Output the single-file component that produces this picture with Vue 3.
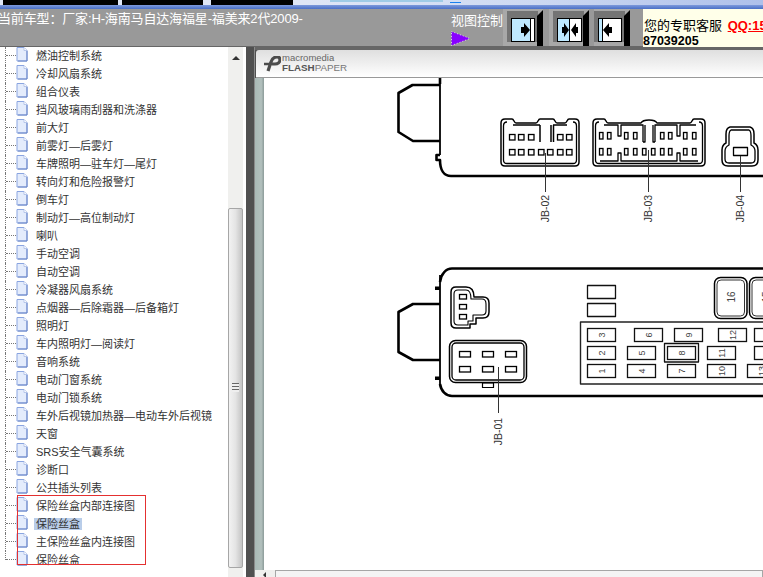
<script setup>
const items = [
  '燃油控制系统', '冷却风扇系统', '组合仪表', '挡风玻璃雨刮器和洗涤器', '前大灯', '前雾灯—后雾灯',
  '车牌照明—驻车灯—尾灯', '转向灯和危险报警灯', '倒车灯', '制动灯—高位制动灯', '喇叭', '手动空调',
  '自动空调', '冷凝器风扇系统', '点烟器—后除霜器—后备箱灯', '照明灯', '车内照明灯—阅读灯', '音响系统',
  '电动门窗系统', '电动门锁系统', '车外后视镜加热器—电动车外后视镜', '天窗', 'SRS安全气囊系统', '诊断口',
  '公共插头列表', '保险丝盒内部连接图', '保险丝盒', '主保险丝盒内连接图', '保险丝盒'
]

const jb02Pins = [
  [509, 134], [518, 134], [528, 134], [557, 134], [566, 134],
  [509, 149], [518, 149], [528, 149], [538, 149], [547, 149], [557, 149], [566, 149]
]
const jb03Pins = [
  [599, 132], [607, 132], [624, 132], [633, 132], [660, 132], [668, 132], [683, 132], [692, 132],
  [599, 148], [607, 148], [624, 148], [633, 148], [642, 148], [651, 148], [660, 148], [668, 148], [683, 148], [692, 148]
]
const jb01Pins = [
  [459, 351], [482, 351], [505, 351], [459, 366], [482, 366], [505, 366]
]
const fuses = [
  { n: '3', x: 587, y: 328 }, { n: '6', x: 634, y: 328 }, { n: '9', x: 674, y: 328 }, { n: '12', x: 718, y: 328 }, { n: '', x: 754, y: 328 },
  { n: '2', x: 587, y: 346 }, { n: '5', x: 627, y: 346 }, { n: '8', x: 667, y: 346 }, { n: '11', x: 707, y: 346 }, { n: '', x: 754, y: 346 },
  { n: '1', x: 587, y: 364 }, { n: '4', x: 627, y: 364 }, { n: '7', x: 667, y: 364 }, { n: '10', x: 707, y: 364 }, { n: '13', x: 747, y: 364 }
]
</script>

<template>
  <div class="page">
    <div class="top-strip">
      <span class="tab tab-1"></span>
      <span class="tab tab-2"></span>
      <span class="tab tab-3"></span>
      <span class="address"></span>
      <span class="link-dots"></span>
    </div>
    <div class="blue-band"></div>

    <div class="toolbar">
      <div class="car-title">当前车型：厂家:H-海南马自达海福星-福美来2代2009-</div>
      <div class="view-control">
        <div class="view-label">视图控制</div>
        <svg class="view-arrow" width="20" height="15" viewBox="0 0 20 15">
          <polygon points="0.5,0.5 19,7.5 0.5,14.5" fill="#8800ff" stroke="#fff" stroke-dasharray="1 2" stroke-width="0.7" />
        </svg>
      </div>

      <svg class="view-btn btn-1" width="40" height="37" viewBox="0 0 40 37">
        <rect width="40" height="37" fill="#a8a8a8" />
        <rect x="4" y="2" width="31" height="31" fill="#747474" />
        <polygon points="34,7 40,1 40,37 34,37" fill="#000" />
        <rect x="8.5" y="9.5" width="23" height="23" fill="#bfe9ff" stroke="#000" />
        <rect x="28" y="10" width="3" height="22" fill="#fff" />
        <line x1="27.5" y1="10" x2="27.5" y2="32" stroke="#000" />
        <path d="M18 18h3v-4l6 7-6 7v-4h-3z" fill="#000" />
      </svg>
      <svg class="view-btn btn-2" width="40" height="37" viewBox="0 0 40 37">
        <rect width="40" height="37" fill="#a8a8a8" />
        <rect x="4" y="2" width="31" height="31" fill="#747474" />
        <polygon points="34,7 40,1 40,37 34,37" fill="#000" />
        <rect x="8.5" y="9.5" width="24" height="23" fill="#fff" stroke="#000" />
        <rect x="9" y="10" width="11" height="22" fill="#bfe9ff" />
        <line x1="20.5" y1="10" x2="20.5" y2="32" stroke="#000" />
        <path d="M13 18h2v-4l5 7-5 7v-4h-2z" fill="#000" />
        <path d="M29 18h-2v-4l-5 7 5 7v-4h2z" fill="#000" />
      </svg>
      <svg class="view-btn btn-3" width="36" height="37" viewBox="0 0 36 37">
        <rect width="36" height="37" fill="#a8a8a8" />
        <rect x="0" y="2" width="31" height="31" fill="#747474" />
        <polygon points="30,7 36,1 36,37 30,37" fill="#000" />
        <rect x="4.5" y="9.5" width="23" height="23" fill="#fff" stroke="#000" />
        <rect x="5" y="10" width="3" height="22" fill="#bfe9ff" />
        <line x1="8.5" y1="10" x2="8.5" y2="32" stroke="#000" />
        <path d="M18 18h-3v-4l-6 7 6 7v-4h3z" fill="#000" />
      </svg>

      <div class="service">
        <div class="service-line">您的专职客服 <a class="qq">QQ:15</a></div>
        <div class="service-num">87039205</div>
      </div>
    </div>

    <div class="main">
      <div class="tree-panel">
        <ul class="tree">
          <li v-for="(item, i) in items" :key="i" class="tree-row">
            <span :class="['branch', { 'branch-last': i === items.length - 1 }]"></span>
            <svg class="file-icon" width="12" height="15" viewBox="0 0 12 15">
              <path d="M1 .5h7l3 3v10.500H1z" fill="#e4ecfc" stroke="#8aa5e0" />
              <path d="M8 .5v3h3" fill="#fff" stroke="#a9bce6" stroke-width="0.8" />
              <path d="M11 4v10H2" fill="none" stroke="#6a86c8" />
            </svg>
            <span :class="['label', { selected: i === 26 }]">{{ item }}</span>
          </li>
        </ul>
        <svg class="red-box" width="129" height="70" viewBox="0 0 129 70">
          <rect x="0.5" y="0.5" width="128" height="69" fill="none" stroke="#e43030" />
        </svg>
        <div class="scrollbar">
          <div class="scroll-up"><span class="up-arrow"></span></div>
          <div class="thumb"><span class="grip"></span></div>
        </div>
      </div>

      <div class="splitter"></div>

      <div class="paper">
        <div class="paper-head">
          <svg class="fp-logo" width="18" height="16" viewBox="0 0 18 16">
            <path d="M1 8h8" stroke="#4c4c4c" stroke-width="2.500" fill="none" />
            <path d="M5 15l3-9c1-3 3-5 6-5 2 0 3 1 3 3s-2 4-5 4H9" stroke="#4c4c4c" stroke-width="3.200" fill="none" />
          </svg>
          <div class="fp-text">
            <div class="fp-brand">macromedia</div>
            <div class="fp-name"><b>FLASH</b>PAPER</div>
          </div>
        </div>

        <div class="paper-body">
          <div class="paper-gutter"></div>
          <svg class="sheet" width="499" height="492" viewBox="264 78 499 492">
            <g fill="none" stroke="#000" stroke-linejoin="round">
              <!-- upper box outline -->
              <path d="M440 85H412.500L398.500 93V132L413 141H440" stroke-width="2.600" />
              <path d="M440 78V155" stroke-width="1.800" />
              <path d="M440 78V84" stroke-width="2.600" />
              <path d="M440 155H436.500V160H440C440 170 444 176 451 176H763" stroke-width="2.600" />

              <!-- JB-02 -->
              <path d="M505 119H512C514 119 514 123 516 123H536C538 123 538 119 540 119H553C555 119 555 123 557 123H565C567 123 567 119 569 119H575Q579 119 579 123V162Q579 166 575 166H505Q501 166 501 162V123Q501 119 505 119Z" stroke-width="1.500" />
              <path d="M507 122Q503.500 122 503.500 126V160Q503.500 163.500 507 163.500H573Q576.500 163.500 576.500 160V126Q576.500 122 573 122" stroke-width="1.300" />
              <path d="M540 125V142M551 125V142M553.500 125V142" stroke-width="1.500" />
              <path d="M513 125H540M553 125H567" stroke-width="1.300" />

              <!-- JB-03 -->
              <path d="M597 119H604C606 119 606 123 608 123H641C643 119 655 119 657 123H690C692 123 692 119 694 119H701Q705 119 705 123V162Q705 166 701 166H597Q593 166 593 162V123Q593 119 597 119Z" stroke-width="1.500" />
              <path d="M599 122Q595.500 122 595.500 126V160Q595.500 163.500 599 163.500H699Q702.500 163.500 702.500 160V126Q702.500 122 699 122" stroke-width="1.300" />
              <path d="M604 125H618V136H621V125H643V142M655 142V125H677V136H680V125H696" stroke-width="1.300" />
              <path d="M600 161H618V153H621V161H677V153H680V161H698" stroke-width="1.300" />
              <path d="M643 142H645V125M653 125V142H655" stroke-width="1.300" />

              <!-- JB-04 -->
              <path d="M730 127H750Q754 128 754 134V143Q758 145 758 150V160Q758 166 752 166H728Q722 166 722 160V150Q722 145 726 143V134Q726 128 730 127Z" stroke-width="1.500" />
              <path d="M731 130H749Q751 131 751 136V145Q755 147 755 151V159Q755 163 751 163H729Q725 163 725 159V151Q725 147 729 145V136Q729 131 731 130Z" stroke-width="1.300" />
              <rect x="733.500" y="147.500" width="14" height="8" stroke-width="1.300" />

              <!-- lower box outline -->
              <path d="M763 268.500H452C446 268.500 441 274 440 282" stroke-width="2.600" />
              <path d="M440 275V386" stroke-width="1.800" />
              <path d="M440 304H413L398.500 312V352L413 360H440" stroke-width="2.600" />
              <path d="M440 384C441 391 446 396 452 396H763" stroke-width="2.600" />

              <!-- 3 pin connector -->
              <path d="M456 287H466Q474 287 474 297H483Q489 297 489 303V312Q489 318 483 318H476V324H470V328H456Q451 328 451 323V292Q451 287 456 287Z" stroke-width="1.500" />
              <path d="M458 290H466Q471 290 471 299H482Q486 299 486 304V311Q486 315 482 315H473V321H468V325H458Q454 325 454 321V294Q454 290 458 290Z" stroke-width="1.100" />

              <!-- JB-01 -->
              <rect x="482.500" y="383" width="11" height="4.500" stroke-width="1.200" />
              <rect x="449.500" y="340.500" width="77" height="42" rx="6" stroke-width="1.500" />
              <rect x="452" y="343" width="72" height="37" rx="4" stroke-width="1.300" />

              <!-- fuse panel -->
              <path d="M763 322H580.500V384H763" stroke="#222" stroke-width="1.400" />
              <rect x="587.500" y="285.500" width="28" height="13" stroke="#111" stroke-width="1.300" />
              <rect x="587.500" y="303.500" width="28" height="13" stroke="#111" stroke-width="1.300" />
              <rect x="664.500" y="343.500" width="34" height="18.500" stroke="#111" stroke-width="1.300" />

              <!-- big fuses -->
              <rect x="714.500" y="277.500" width="32.500" height="41" rx="6" stroke-width="1.500" />
              <rect x="717" y="280" width="27.500" height="36" rx="4" stroke="#333" stroke-width="1" />
              <rect x="749.500" y="277.500" width="32" height="41" rx="6" stroke-width="1.500" />
              <rect x="752" y="280" width="27" height="36" rx="4" stroke="#333" stroke-width="1" />
            </g>

            <rect x="435" y="286.500" width="5" height="3.500" fill="#000" />
            <rect x="435" y="376.500" width="5" height="3.500" fill="#000" />

            <rect v-for="(p, i) in jb02Pins" :key="'a' + i" :x="p[0] + 0.5" :y="p[1] + 0.5" width="5.500" height="5.500" class="pin" />
            <rect v-for="(p, i) in jb03Pins" :key="'b' + i" :x="p[0] + 0.5" :y="p[1] + 0.5" width="3.500" height="6.500" class="pin" />
            <rect v-for="(p, i) in jb01Pins" :key="'c' + i" :x="p[0] + 0.5" :y="p[1] + 0.5" width="11" height="5.500" class="pin" />
            <rect x="459.500" y="294.500" width="7" height="4.500" class="pin" />
            <rect x="459.500" y="304.500" width="7" height="4.500" class="pin" />
            <rect x="459.500" y="314.500" width="7" height="4.500" class="pin" />

            <g v-for="f in fuses" :key="f.x + '-' + f.y">
              <rect :x="f.x + 0.5" :y="f.y + 0.5" width="28" height="13" class="fuse" />
              <text class="fuse-no" :transform="`translate(${f.x + 14.5} ${f.y + 7}) rotate(-90)`" text-anchor="middle" dominant-baseline="central">{{ f.n }}</text>
            </g>
            <text class="fuse-no big" transform="translate(731 297) rotate(-90)" text-anchor="middle" dominant-baseline="central">16</text>
            <text class="fuse-no big" transform="translate(766 297) rotate(-90)" text-anchor="middle" dominant-baseline="central">15</text>

            <line x1="545.500" y1="153" x2="545.500" y2="192" class="leader" />
            <line x1="648.500" y1="150" x2="648.500" y2="192" class="leader" />
            <line x1="740.500" y1="156" x2="740.500" y2="192" class="leader" />
            <line x1="498.500" y1="367" x2="498.500" y2="413" class="leader" />
            <text class="jb" transform="translate(545 208.500) rotate(-90)" text-anchor="middle" dominant-baseline="central">JB-02</text>
            <text class="jb" transform="translate(648 208.500) rotate(-90)" text-anchor="middle" dominant-baseline="central">JB-03</text>
            <text class="jb" transform="translate(740 208.500) rotate(-90)" text-anchor="middle" dominant-baseline="central">JB-04</text>
            <text class="jb" transform="translate(498 431.500) rotate(-90)" text-anchor="middle" dominant-baseline="central">JB-01</text>
          </svg>
        </div>

        <div class="paper-scroll">
          <span class="left-arrow"></span>
          <span class="h-thumb"></span>
        </div>
      </div>
    </div>
  </div>
</template>

<style scoped>
.page {
  display: flex;
  flex-direction: column;
  width: 763px;
  height: 577px;
  overflow: hidden;
  background: #fff;
  font-family: "Liberation Sans", "Noto Sans CJK SC", sans-serif;
}

.top-strip {
  display: flex;
  align-items: flex-start;
  height: 5px;
  background: linear-gradient(to right, #dfe6f6 40%, #cdd9f2 70%, #aec0ea);
}

.tab {
  height: 5px;
  background: #000;
}

.tab-1 {
  width: 115px;
  margin-left: 3px;
}

.tab-2 {
  width: 81px;
  margin-left: 4px;
}

.tab-3 {
  width: 82px;
  margin-left: 8px;
}

.address {
  width: 113px;
  height: 2px;
  margin-left: 37px;
  background: #9fcbe6;
}

.link-dots {
  width: 11px;
  height: 1px;
  margin-top: 2px;
  margin-left: 7px;
  background: #1a80ee;
}

.blue-band {
  height: 4px;
  background: linear-gradient(#7d99dc, #4a6fc6);
}

.toolbar {
  display: flex;
  align-items: flex-start;
  height: 38px;
  background: #999;
  border-bottom: 1px solid #666;
  box-sizing: border-box;
}

.car-title {
  width: 453px;
  margin-left: -2px;
  padding-top: 2px;
  font-size: 13px;
  letter-spacing: -0.15px;
  line-height: 15px;
  color: #fff;
  white-space: nowrap;
}

.view-control {
  width: 52px;
}

.view-label {
  padding-top: 4px;
  font-size: 13px;
  line-height: 15px;
  color: #fff;
  white-space: nowrap;
}

.view-arrow {
  display: block;
  margin-top: 3px;
}

.view-btn {
  flex: none;
  display: block;
}

.btn-2 {
  margin-left: 6px;
}

.btn-3 {
  margin-left: 5px;
}

.service {
  width: 120px;
  height: 38px;
  margin-left: 13px;
  overflow: hidden;
  background: #ffffe9;
  color: #000;
}

.service-line {
  padding: 9px 0 0 1px;
  font-size: 13px;
  line-height: 15px;
  white-space: nowrap;
}

.qq {
  margin-left: 2px;
  font-size: 13px;
  font-weight: bold;
  color: #f00;
  text-decoration: underline;
}

.service-num {
  margin-top: 1px;
  font-size: 12.5px;
  font-weight: bold;
  line-height: 14px;
}

.main {
  display: flex;
  flex: 1;
  min-height: 0;
}

.tree-panel {
  position: relative;
  display: flex;
  width: 246px;
  background: #fff;
}

.tree {
  flex: 1;
  margin: 0;
  padding: 0;
  list-style: none;
}

.tree-row {
  display: flex;
  align-items: flex-start;
  height: 18px;
  font-size: 11px;
  line-height: 18px;
  color: #333;
}

.branch {
  position: relative;
  flex: none;
  width: 10px;
  height: 18px;
  margin-left: 5px;
  border-left: 1px dotted #777;
}

.branch::after {
  content: "";
  position: absolute;
  left: 0;
  top: 8px;
  width: 10px;
  border-top: 1px dotted #777;
}

.branch-last {
  height: 9px;
}

.file-icon {
  flex: none;
}

.label {
  height: 12px;
  margin-top: 3px;
  margin-left: 6px;
  padding: 0 2px;
  line-height: 12px;
  white-space: nowrap;
}

.selected {
  background: #b9cde9;
}

.red-box {
  position: absolute;
  left: 17px;
  top: 448px;
}

.scrollbar {
  display: flex;
  flex-direction: column;
  flex: none;
  width: 15px;
  margin-right: 3px;
  background: #f0f0ee;
}

.scroll-up {
  display: flex;
  flex: none;
  justify-content: center;
  height: 161px;
  padding-top: 9px;
  box-sizing: border-box;
}

.up-arrow {
  width: 0;
  height: 0;
  border-left: 4px solid transparent;
  border-right: 4px solid transparent;
  border-bottom: 4px solid #333;
}

.thumb {
  display: flex;
  flex: none;
  align-items: flex-start;
  justify-content: center;
  height: 360px;
  box-sizing: border-box;
  border: 1px solid #a6a6a6;
  border-radius: 2px;
  background: linear-gradient(to right, #f2f2f2, #e4e4e4 50%, #c4c4c4);
}

.grip {
  width: 7px;
  height: 9px;
  margin-top: 174px;
  background: repeating-linear-gradient(#666 0 1px, #eee 1px 3px);
}

.splitter {
  flex: none;
  width: 8px;
  background: #505050;
  border-right: 1px solid #8a8a8a;
}

.paper {
  display: flex;
  flex: 1;
  flex-direction: column;
  min-width: 0;
  border-top: 3px solid #666;
  background: #505050;
}

.paper-head {
  display: flex;
  flex: none;
  align-items: center;
  height: 28px;
  margin-left: 1px;
  padding-left: 7px;
  padding-bottom: 2px;
  box-sizing: border-box;
  border-bottom: 1px solid #999;
  border-radius: 3px 0 0 0;
  background: linear-gradient(#dfdfdf, #fff);
}

.fp-logo {
  flex: none;
  margin-top: 2px;
}

.fp-text {
  margin-left: 1px;
  color: #666;
}

.fp-brand {
  font-size: 9.5px;
  line-height: 10px;
}

.fp-name {
  font-size: 9.8px;
  line-height: 10px;
  color: #777;
}

.fp-name b {
  color: #555;
}

.paper-body {
  display: flex;
  flex: 1;
  min-height: 0;
}

.paper-gutter {
  flex: none;
  width: 9px;
  background: linear-gradient(to right, #a9b9b6, #b2c0bd 70%, #8c9b99);
}

.sheet {
  display: block;
  flex: none;
  background: #fff;
}

.paper-scroll {
  display: flex;
  flex: none;
  align-items: stretch;
  height: 7px;
  background: #f0f0ee;
}

.left-arrow {
  width: 0;
  height: 0;
  margin: 2px 0 0 8px;
  border-top: 3px solid transparent;
  border-bottom: 3px solid transparent;
  border-right: 3px solid #333;
}

.h-thumb {
  flex: 1;
  margin-left: 9px;
  border: 1px solid #a6a6a6;
  border-bottom: 0;
  background: #f4f4f4;
}

.pin {
  fill: #fff;
  stroke: #000;
  stroke-width: 1.3;
}

.fuse {
  fill: #fff;
  stroke: #111;
  stroke-width: 1.3;
}

.fuse-no {
  font-family: "Liberation Sans", sans-serif;
  font-size: 9px;
  fill: #444;
}

.big {
  font-size: 10px;
}

.jb {
  font-family: "Liberation Sans", sans-serif;
  font-size: 10.5px;
  fill: #333;
}

.leader {
  stroke: #333;
  stroke-width: 1;
}
</style>

<style>
html,
body {
  margin: 0;
  overflow: hidden;
}
</style>
